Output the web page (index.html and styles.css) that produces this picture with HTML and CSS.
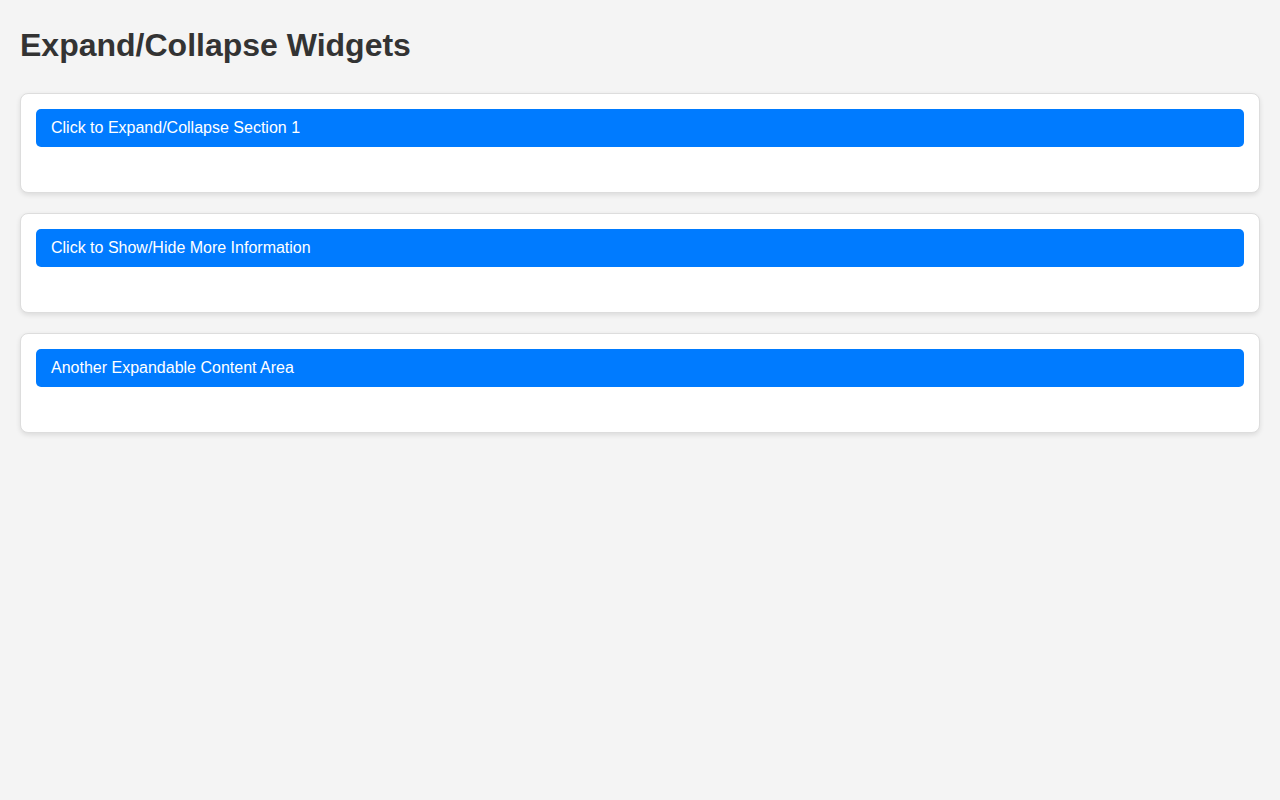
FILE: index.html
```html
<!DOCTYPE html>
<html lang="en">
<head>
    <meta charset="UTF-8">
    <meta name="viewport" content="width=device-width, initial-scale=1.0">
    <title>Expand/Collapse Widgets</title>
    <link rel="stylesheet" href="styles.css">
</head>
<body>

<h1>Expand/Collapse Widgets</h1>

<div class="widget">
    <button class="toggle" onclick="toggleContent(this)">Click to Expand/Collapse Section 1</button>
    <div class="content">
        <p>This is the content of section 1. It is hidden until you click the button above.</p>
    </div>
</div>

<div class="widget">
    <button class="toggle" onclick="toggleContent(this)">Click to Show/Hide More Information</button>
    <div class="content">
        <p>Here is some more information that can be shown or hidden.</p>
    </div>
</div>

<div class="widget">
    <button class="toggle" onclick="toggleContent(this)">Another Expandable Content Area</button>
    <div class="content">
        <p>Another block of content that expands when the button is clicked.</p>
    </div>
</div>

<script>
    function toggleContent(button) {
        const content = button.nextElementSibling;
        content.classList.toggle('open');
    }
</script>

</body>
</html>
```

FILE: styles.css
```css
body {
    font-family: 'Liberation Sans', Helvetica, Arial, sans-serif;
    background-color: #f4f4f4;
    color: #333;
    margin: 0;
    padding: 20px;
}
h1 {
    font-size: 32px;
    margin: 7px 0 29px;
}
.widget {
    background: #fff;
    border: 1px solid #ddd;
    border-radius: 8px;
    padding: 15px;
    margin-bottom: 20px;
    box-shadow: 0 2px 5px rgba(0, 0, 0, 0.1);
}
.toggle {
    display: block;
    width: 100%;
    background-color: #007bff;
    color: #fff;
    border: none;
    border-radius: 5px;
    padding: 10px 15px;
    font-family: inherit;
    font-size: 16px;
    text-align: left;
    cursor: pointer;
}
.toggle:hover {
    background-color: #0069d9;
}
.content {
    margin-top: 30px;
    padding: 0 15px;
}
.content p {
    display: none;
    margin: 0 0 10px;
}
.content.open p {
    display: block;
}
```
